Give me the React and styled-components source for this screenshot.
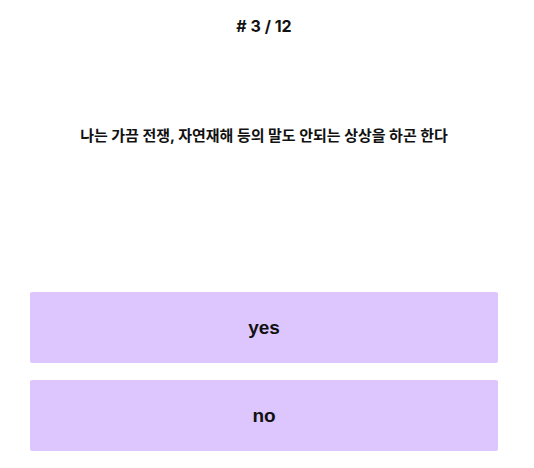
import React from "react";
import styled, { createGlobalStyle } from "styled-components";

const Global = createGlobalStyle`
  html, body { margin: 0; padding: 0; background: #ffffff; }
  body { font-family: Inter, "Noto Sans CJK KR", sans-serif; color: #111111; }
`;

const Page = styled.div`
  display: flex;
  flex-direction: column;
  align-items: center;
  padding: 0 36px 0 30px;
`;

const Counter = styled.div`
  margin-top: 16px;
  font-size: 16px;
  line-height: 20px;
  font-weight: 700;
  color: #111;
`;

const Question = styled.p`
  margin: 89px 0 0;
  font-size: 15px;
  line-height: 22px;
  font-weight: 700;
  text-align: center;
  color: #111;
`;

const Answers = styled.div`
  align-self: stretch;
  display: flex;
  flex-direction: column;
  gap: 17px;
  margin-top: 145px;
`;

const AnswerButton = styled.button`
  height: 71px;
  border: none;
  border-radius: 2px;
  background: #ddc6fe;
  font-family: "Liberation Sans", Arial, sans-serif;
  font-weight: 700;
  font-size: 19px;
  color: #111;
  cursor: pointer;
`;

export default function App() {
  return (
    <>
      <Global />
      <Page>
        <Counter># 3 / 12</Counter>
        <Question>나는 가끔 전쟁, 자연재해 등의 말도 안되는 상상을 하곤 한다</Question>
        <Answers>
          <AnswerButton>yes</AnswerButton>
          <AnswerButton>no</AnswerButton>
        </Answers>
      </Page>
    </>
  );
}
